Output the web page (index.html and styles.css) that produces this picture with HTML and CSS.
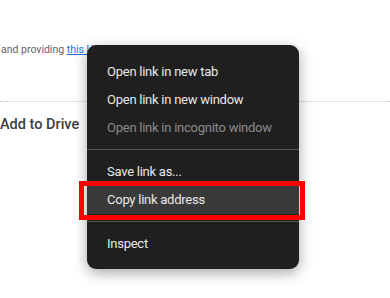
FILE: index.html
```html
<!DOCTYPE html>
<html lang="en">
<head>
    <meta charset="UTF-8">
    <meta name="viewport" content="width=device-width, initial-scale=1.0">
    <title>Copy link address</title>
    <link rel="stylesheet" href="styles.css">
</head>
<body>

    <div class="page">
        <p class="intro">and providing <a href="#" class="link">this URL</a></p>
        <div class="divider"></div>
        <h2 class="drive">Add to Drive</h2>
    </div>

    <!-- Menu de contexto -->
    <div class="menu">
        <div class="item">Open link in new tab</div>
        <div class="item">Open link in new window</div>
        <div class="item disabled">Open link in incognito window</div>
        <div class="sep"></div>
        <div class="item">Save link as...</div>
        <div class="item hover marked">Copy link address</div>
        <div class="sep"></div>
        <div class="item">Inspect</div>
    </div>

</body>
</html>
```

FILE: styles.css
```css
* {
    margin: 0;
    padding: 0;
    box-sizing: border-box;
}

body {
    font-family: "Segoe UI", Roboto, "Noto Sans", sans-serif;
    background-color: #fff;
    width: 390px;
    height: 298px;
    overflow: hidden;
    position: relative;
}

/* Página por trás */
.page {
    padding-top: 43px;
}

.intro {
    font-size: 10.5px;
    color: #5f6368;
    white-space: nowrap;
    padding-left: 1px;
    line-height: 14px;
}

.link {
    color: #1a73e8;
    text-decoration: underline;
}

.divider {
    margin-top: 44px;
    border-top: 1px dotted #c4c4c4;
}

.drive {
    font-size: 14.5px;
    font-weight: 500;
    color: #3c4043;
    margin-top: 13px;
    line-height: 20px;
}

/* Menu */
.menu {
    position: absolute;
    left: 87px;
    top: 45px;
    width: 212px;
    padding: 13px 0 11px;
    background-color: #1f1f1f;
    border-radius: 9px;
    box-shadow: 0 4px 14px rgba(0, 0, 0, 0.35);
}

.item {
    height: 28px;
    line-height: 28px;
    padding-left: 20px;
    font-size: 13px;
    letter-spacing: -0.25px;
    color: #e8e8e8;
    white-space: nowrap;
    position: relative;
}

.item.disabled {
    color: #8b8b8b;
}

.item.hover {
    background-color: #3a3a3a;
}

/* Destaque vermelho */
.item.marked::after {
    content: "";
    position: absolute;
    left: -8px;
    right: -6px;
    top: -5px;
    bottom: -6px;
    border: 5px solid #ff0000;
}

.sep {
    height: 1px;
    margin: 7px 0 8px;
    background-color: #555;
}
```
